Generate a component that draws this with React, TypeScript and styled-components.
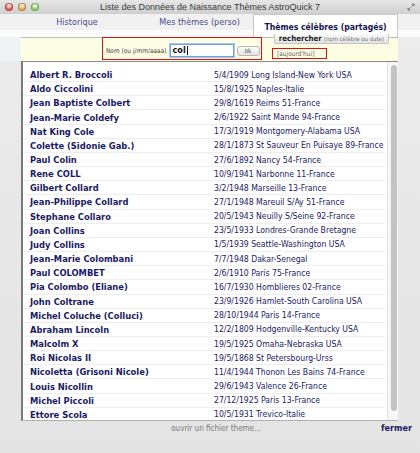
import styled, { createGlobalStyle } from "styled-components";

const GlobalStyle = createGlobalStyle`
    html, body {
        margin: 0;
        padding: 0;
        width: 420px;
        height: 453px;
        overflow: hidden;
        background: #e8e8e8;
    }
`;

const Window = styled.div`
    width: 420px;
    height: 453px;
    display: flex;
    flex-direction: column;
    background: linear-gradient(#ececec, #e4e4e4);
    font-family: "DejaVu Sans Condensed", "DejaVu Sans", sans-serif;
    overflow: hidden;
`;

const TitleBar = styled.div`
    height: 14px;
    display: flex;
    align-items: center;
    background: linear-gradient(#e6e6e6, #cfcfcf);
    padding: 0 5px;
`;

const Lights = styled.div`
    display: flex;
    gap: 5px;
`;

const Light = styled.span<{ $color: string }>`
    width: 8px;
    height: 8px;
    border-radius: 50%;
    background: radial-gradient(circle at 50% 35%, #fff 0%, ${(p) => p.$color} 55%);
    box-shadow: inset 0 0 0 0.5px rgba(0, 0, 0, 0.35);
`;

const Title = styled.div`
    flex: 1;
    text-align: center;
    font-family: "Liberation Sans", sans-serif;
    font-size: 9px;
    color: #3a3a3a;
    margin-right: 26px;
`;

const Resize = styled.svg`
    width: 8px;
    height: 8px;
`;

const TabStrip = styled.div`
    height: 23px;
    display: flex;
    background: linear-gradient(#f1f1f1 0, #f1f1f1 16px, #fbfbfb 16px);
    padding-left: 22px;
`;

const Tab = styled.div<{ $active?: boolean; $w: number; $shift?: number }>`
    width: ${(p) => p.$w}px;
    height: ${(p) => (p.$active ? 23 : 16)}px;
    display: flex;
    align-items: center;
    justify-content: center;
    font-size: ${(p) => (p.$active ? 8.6 : 9)}px;
    font-weight: ${(p) => (p.$active ? "bold" : "normal")};
    color: ${(p) => (p.$active ? "#141450" : "#4b4b8c")};
    background: ${(p) => (p.$active ? "#ffffff" : "transparent")};
    border: ${(p) => (p.$active ? "1px solid #c9c9c9" : "none")};
    border-bottom: none;
    box-sizing: border-box;
    padding-left: ${(p) => p.$shift ?? 0}px;
    padding-top: ${(p) => (p.$active ? 2 : 0)}px;
    white-space: nowrap;
`;

const Body = styled.div`
    flex: 1;
    display: flex;
    flex-direction: column;
    padding: 0 22px 0 21px;
    background: linear-gradient(90deg, #eef3f6 0, #eef3f6 21px, transparent 21px) top / 100% 24px no-repeat;
`;

const SearchPanel = styled.div`
    position: relative;
    height: 24px;
    display: flex;
    align-items: stretch;
    background: #fdfde4;
    border-top: 1px solid #bdbdbd;
    box-sizing: border-box;
    padding-left: 81px;
`;

const SearchTab = styled.div`
    position: absolute;
    top: -4px;
    right: 9px;
    height: 10px;
    padding: 0 4px;
    display: flex;
    align-items: center;
    gap: 2px;
    background: linear-gradient(#fafafa, #e2e2e2);
    border: 1px solid #c4c4c4;
    border-top: none;
    box-sizing: border-box;
    border-radius: 0 0 2px 2px;
    white-space: nowrap;
`;

const SearchTabLabel = styled.span`
    font-size: 7.8px;
    font-weight: bold;
    color: #222;
`;

const SearchTabHint = styled.span`
    font-size: 6px;
    color: #777;
`;

const RedBox = styled.div<{ $w: number; $h: number; $mt: number; $ml?: number }>`
    width: ${(p) => p.$w}px;
    height: ${(p) => p.$h}px;
    margin-top: ${(p) => p.$mt}px;
    margin-left: ${(p) => p.$ml ?? 0}px;
    border: 1px solid #e01010;
    box-sizing: border-box;
    display: flex;
    align-items: center;
`;

const FieldLabel = styled.span`
    font-size: 6.5px;
    color: #444;
    margin: 4px 3px 0 3px;
    white-space: nowrap;
`;

const Input = styled.div`
    width: 64px;
    height: 13px;
    box-sizing: border-box;
    margin-top: 3px;
    border: 1px solid #6f9fd6;
    box-shadow: 0 0 0 1px #a9c8ee;
    background: #fff;
    font-size: 9px;
    font-weight: bold;
    color: #111;
    padding-left: 2px;
    display: flex;
    align-items: center;
`;

const Caret = styled.span`
    display: inline-block;
    width: 1px;
    height: 9px;
    background: #111;
    margin-left: 1px;
`;

const OkButton = styled.div`
    width: 23px;
    height: 10px;
    margin: 5px 0 0 3px;
    box-sizing: border-box;
    border: 1px solid #b5b5b5;
    border-radius: 3px;
    background: linear-gradient(#fdfdfd, #e3e3e3);
    font-size: 6.5px;
    color: #555;
    display: flex;
    align-items: center;
    justify-content: center;
`;

const TodayText = styled.span`
    font-size: 6.5px;
    color: #666;
    padding-left: 4px;
    white-space: nowrap;
`;

const ListBox = styled.div`
    position: relative;
    height: 360px;
    background: #fff;
    border-top: 1px solid #8a8a8a;
    border-left: 2px solid #7a7a7a;
    border-bottom: 1px solid #b0b0b0;
    box-sizing: border-box;
    overflow: hidden;
    padding: 6px 12px 0 0;
`;

const Row = styled.div`
    height: 14.17px;
    display: flex;
    align-items: center;
    border-bottom: 1px solid #eeeeee;
    box-sizing: border-box;
    color: #1a1a64;
`;

const Name = styled.span`
    width: 184px;
    padding-left: 7px;
    font-size: 9.3px;
    font-weight: bold;
    white-space: nowrap;
`;

const Birth = styled.span`
    font-size: 8.6px;
    white-space: nowrap;
`;

const ScrollThumb = styled.div`
    position: absolute;
    right: 1px;
    top: 3px;
    width: 6px;
    height: 346px;
    border-radius: 3px;
    background: #c3c3c3;
`;

const ScrollTrack = styled.div`
    position: absolute;
    right: 0;
    top: 0;
    bottom: 0;
    width: 10px;
    background: #f7f7f7;
    border-left: 1px solid #e2e2e2;
`;

const Footer = styled.div`
    height: 14px;
    display: flex;
    align-items: center;
`;

const OpenLink = styled.span`
    flex: 1;
    text-align: center;
    font-size: 8px;
    color: #7a7a7a;
    padding-left: 30px;
`;

const CloseLink = styled.span`
    font-size: 9px;
    font-weight: bold;
    color: #1a1a64;
    margin-right: -14px;
`;

const people: [string, string][] = [
    ["Albert R. Broccoli", "5/4/1909 Long Island-New York USA"],
    ["Aldo Ciccolini", "15/8/1925 Naples-Italie"],
    ["Jean Baptiste Colbert", "29/8/1619 Reims 51-France"],
    ["Jean-Marie Coldefy", "2/6/1922 Saint Mande 94-France"],
    ["Nat King Cole", "17/3/1919 Montgomery-Alabama USA"],
    ["Colette (Sidonie Gab.)", "28/1/1873 St Sauveur En Puisaye 89-France"],
    ["Paul Colin", "27/6/1892 Nancy 54-France"],
    ["Rene COLL", "10/9/1941 Narbonne 11-France"],
    ["Gilbert Collard", "3/2/1948 Marseille 13-France"],
    ["Jean-Philippe Collard", "27/1/1948 Mareuil S/Ay 51-France"],
    ["Stephane Collaro", "20/5/1943 Neuilly S/Seine 92-France"],
    ["Joan Collins", "23/5/1933 Londres-Grande Bretagne"],
    ["Judy Collins", "1/5/1939 Seattle-Washington USA"],
    ["Jean-Marie Colombani", "7/7/1948 Dakar-Senegal"],
    ["Paul COLOMBET", "2/6/1910 Paris 75-France"],
    ["Pia Colombo (Eliane)", "16/7/1930 Homblieres 02-France"],
    ["John Coltrane", "23/9/1926 Hamlet-South Carolina USA"],
    ["Michel Coluche (Colluci)", "28/10/1944 Paris 14-France"],
    ["Abraham Lincoln", "12/2/1809 Hodgenville-Kentucky USA"],
    ["Malcolm X", "19/5/1925 Omaha-Nebraska USA"],
    ["Roi Nicolas II", "19/5/1868 St Petersbourg-Urss"],
    ["Nicoletta (Grisoni Nicole)", "11/4/1944 Thonon Les Bains 74-France"],
    ["Louis Nicollin", "29/6/1943 Valence 26-France"],
    ["Michel Piccoli", "27/12/1925 Paris 13-France"],
    ["Ettore Scola", "10/5/1931 Trevico-Italie"],
];

const App = () => {
    return (
        <>
            <GlobalStyle />
            <Window>
                <TitleBar>
                    <Lights>
                        <Light $color="#e0544a" />
                        <Light $color="#e3a24a" />
                        <Light $color="#8dc46a" />
                    </Lights>
                    <Title>Liste des Données de Naissance Thèmes AstroQuick 7</Title>
                    <Resize viewBox="0 0 8 8">
                        <path d="M4.5 3.5 L7 1 M5 1 H7 V3 M3.5 4.5 L1 7 M1 5 V7 H3" stroke="#777" strokeWidth="1" fill="none" />
                    </Resize>
                </TitleBar>
                <TabStrip>
                    <Tab $w={110}>Historique</Tab>
                    <Tab $w={121} $shift={14}>Mes thèmes (perso)</Tab>
                    <Tab $w={145} $active>Thèmes célèbres (partagés)</Tab>
                </TabStrip>
                <Body>
                    <SearchPanel>
                        <SearchTab>
                            <SearchTabLabel>rechercher</SearchTabLabel>
                            <SearchTabHint>(nom célèbre ou date)</SearchTabHint>
                        </SearchTab>
                        <RedBox $w={160} $h={23} $mt={-1}>
                            <FieldLabel>Nom (ou j/mm/aaaa)</FieldLabel>
                            <Input>col<Caret /></Input>
                            <OkButton>ok</OkButton>
                        </RedBox>
                        <RedBox $w={55} $h={11} $mt={10} $ml={10}>
                            <TodayText>[aujourd'hui]</TodayText>
                        </RedBox>
                    </SearchPanel>
                    <ListBox>
                        <ScrollTrack />
                        <ScrollThumb />
                        {people.map(([name, birth]) => (
                            <Row key={name}>
                                <Name>{name}</Name>
                                <Birth>{birth}</Birth>
                            </Row>
                        ))}
                    </ListBox>
                    <Footer>
                        <OpenLink>ouvrir un fichier theme...</OpenLink>
                        <CloseLink>fermer</CloseLink>
                    </Footer>
                </Body>
            </Window>
        </>
    );
};

export default App;
